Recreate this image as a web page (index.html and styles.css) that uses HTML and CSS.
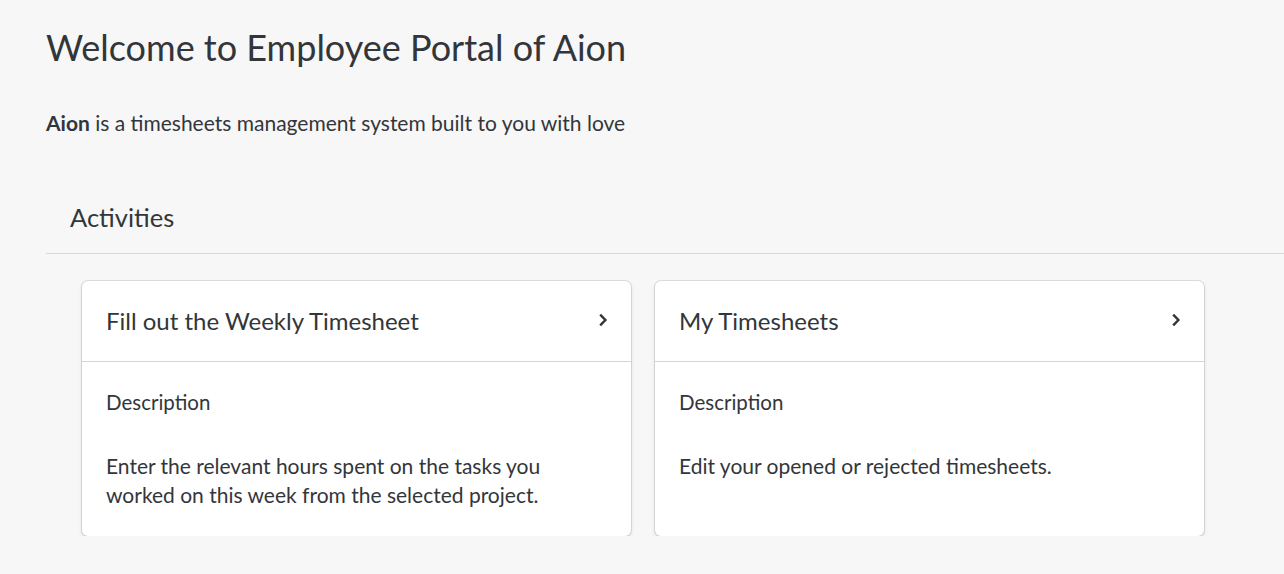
FILE: index.html
```html
<!DOCTYPE html>
<html lang="en">
<head>
<meta charset="utf-8">
<title>Employee Portal of Aion</title>
<link rel="stylesheet" href="styles.css">
</head>
<body>
<main class="page">
  <h1 class="title">Welcome to Employee Portal of Aion</h1>
  <p class="intro"><strong>Aion</strong> is a timesheets management system built to you with love</p>
  <section class="activities">
    <h2 class="section-title">Activities</h2>
    <div class="cards">
      <div class="card">
        <div class="card-head">
          <span class="card-title">Fill out the Weekly Timesheet</span>
          <svg class="chev" width="10" height="14" viewBox="0 0 10 14"><path d="M2.2 1.6 L7.4 7 L2.2 12.4" fill="none" stroke="#32363a" stroke-width="2.4"/></svg>
        </div>
        <div class="card-body">
          <div class="label">Description</div>
          <div class="desc">Enter the relevant hours spent on the tasks you worked on this week from the selected project.</div>
        </div>
      </div>
      <div class="card">
        <div class="card-head">
          <span class="card-title">My Timesheets</span>
          <svg class="chev" width="10" height="14" viewBox="0 0 10 14"><path d="M2.2 1.6 L7.4 7 L2.2 12.4" fill="none" stroke="#32363a" stroke-width="2.4"/></svg>
        </div>
        <div class="card-body">
          <div class="label">Description</div>
          <div class="desc">Edit your opened or rejected timesheets.</div>
        </div>
      </div>
    </div>
  </section>
</main>
</body>
</html>
```
FILE: styles.css
```css
html, body {
  margin: 0;
  padding: 0;
  background: #f7f7f7;
}
body {
  font-family: Lato, "Liberation Sans", sans-serif;
  color: #32363a;
}
.page {
  padding: 23px 0 0 46px;
}
.title {
  margin: 0;
  font-size: 36px;
  font-weight: 400;
  line-height: 48px;
}
.intro {
  margin: 40px 0 0 0;
  font-size: 21px;
  line-height: 24px;
}
.intro strong {
  font-weight: 700;
}
.activities {
  margin-top: 64px;
}
.section-title {
  margin: 0;
  padding: 0 0 0 24px;
  font-size: 25.5px;
  font-weight: 400;
  line-height: 36px;
  height: 55px;
  border-bottom: 1px solid #d9d9d9;
  box-sizing: border-box;
}
.cards {
  display: flex;
  gap: 24px;
  padding: 27px 0 0 36px;
}
.card {
  width: 549px;
  height: 255px;
  background: #fff;
  border-radius: 6px;
  box-shadow: 0 0 0 1px rgba(0,0,0,0.1), 0 2px 4px rgba(0,0,0,0.12);
  box-sizing: border-box;
}
.card-head {
  height: 81px;
  border-bottom: 1px solid #d5d5d5;
  display: flex;
  align-items: center;
  justify-content: space-between;
  padding: 0 24px 0 24px;
  box-sizing: border-box;
}
.card-title {
  font-size: 24px;
  margin-top: -1px;
}
.chev {
  margin-top: -3px;
  margin-right: -1px;
}
.card-body {
  padding: 28px 60px 0 24px;
  font-size: 21px;
}
.label {
  font-size: 20.5px;
  line-height: 24px;
}
.desc {
  margin-top: 37px;
  line-height: 29px;
}
```
